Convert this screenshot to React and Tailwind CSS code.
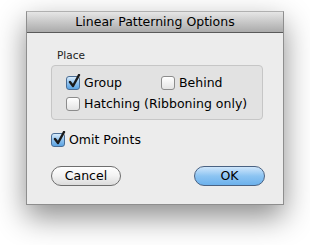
import React from 'react';

function CheckBox({ checked }) {
  if (checked) {
    return (
      <span className="relative w-[14px] h-[14px] rounded-[3px] border border-[#4a6d95] bg-gradient-to-b from-[#d9ecfb] via-[#8fc2ef] to-[#5aa3e2] shrink-0">
        <svg className="absolute left-[1px] top-[-3px]" width="13" height="15" viewBox="0 0 13 15">
          <path d="M2 8 L5 12 L11 1" fill="none" stroke="#1a1a1a" strokeWidth="2.4" strokeLinecap="round" strokeLinejoin="round" />
        </svg>
      </span>
    );
  }
  return (
    <span className="w-[14px] h-[14px] rounded-[3px] border border-[#8c8c8c] bg-gradient-to-b from-[#ffffff] to-[#e4e4e4] shrink-0" />
  );
}

function Option({ checked, label, className = '' }) {
  return (
    <div className={`flex items-center gap-[4px] ${className}`}>
      <CheckBox checked={checked} />
      <span className="text-[12.5px] leading-[16px] text-black">{label}</span>
    </div>
  );
}

export default function App() {
  return (
    <div className="w-[310px] h-[245px] bg-white pt-[11px] pl-[26px] font-['DejaVu_Sans',sans-serif] overflow-hidden">
      <div className="w-[258px] h-[194px] bg-[#ececec] border border-[#8e8e8e] border-t-[#b0b0b0] shadow-[0_12px_28px_rgba(0,0,0,0.45)] flex flex-col">
        <div className="h-[21px] bg-gradient-to-b from-[#e6e6e6] to-[#ababab] border-b border-[#5a5a5a] flex items-center justify-center text-[12.5px] text-black">
          Linear Patterning Options
        </div>

        <div className="pl-[24px] pt-[16px] flex flex-col">
          <div className="pl-[6px] text-[10.5px] leading-[13px] text-[#222]">Place</div>
          <div className="mt-[3px] w-[212px] h-[55px] rounded-[4px] border border-[#c6c6c6] bg-[#e2e2e2] pl-[14px] pt-[9px] flex flex-col gap-[5px]">
            <div className="flex">
              <Option checked label="Group" className="w-[95px]" />
              <Option label="Behind" />
            </div>
            <Option label="Hatching (Ribboning only)" />
          </div>

          <Option checked label="Omit Points" className="mt-[12px]" />

          <div className="mt-[18px] flex justify-between w-[214px]">
            <button className="w-[70px] h-[20px] rounded-full border border-[#6e6e6e] bg-gradient-to-b from-[#ffffff] via-[#f2f2f2] to-[#dcdcdc] text-[12.5px] leading-[18px] text-black">
              Cancel
            </button>
            <button className="w-[71px] h-[20px] rounded-full border border-[#4a6282] bg-gradient-to-b from-[#cfe6fb] via-[#8cc4f2] to-[#6cb1ec] text-[12.5px] leading-[18px] text-black">
              OK
            </button>
          </div>
        </div>
      </div>
    </div>
  );
}
